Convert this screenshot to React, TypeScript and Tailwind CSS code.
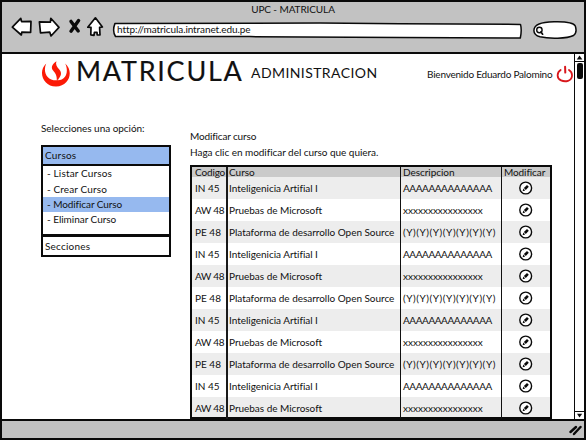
import React from "react";

const courses = [
  { code: "IN 45", name: "Inteligenicia Artifial I", text: "AAAAAAAAAAAAAA", codeTrack: "tracking-[0px]", track: "tracking-[-0.42px]" },
  { code: "AW 48", name: "Pruebas de Microsoft", text: "xxxxxxxxxxxxxxxx", codeTrack: "tracking-[-0.3px]", track: "tracking-[0px]" },
  { code: "PE 48", name: "Plataforma de desarrollo Open Source", text: "(Y)(Y)(Y)(Y)(Y)(Y)(Y)", codeTrack: "tracking-[0px]", track: "tracking-[0.52px]" },
];
const rows = Array.from({ length: 11 }, (_, i) => courses[i % 3]);

function NavIcons() {
  return (
    <svg className="block h-6 w-[94px] shrink-0" viewBox="11 15 94 24" fill="#fff" stroke="#0a0a0a" strokeWidth="1.7" strokeLinejoin="round" strokeLinecap="round">
      <path d="M12.3 27.2 L20.8 18.4 L21.6 21.6 L31 21.4 L30.6 32.4 L21.8 32.2 L21.3 35 Z" />
      <path d="M59 27.4 L50.8 18.3 L50.4 22.2 L39.4 21.8 L40.5 32.8 L49.8 32.2 L51 36 Z" />
      <path d="M71 21.4 L78.2 31 M78.6 20.6 L71 31.2" strokeWidth="3.4" fill="none" />
      <path d="M95.4 17.8 L102.4 27 L99.6 27.4 L100 34.8 L97.2 35 L97 32.4 L94.4 32.4 L94 35.4 L90.8 34.8 L91 27.4 L87.8 27.2 Z" />
    </svg>
  );
}

function SearchBox() {
  return (
    <svg className="block h-5 w-[44px] shrink-0" viewBox="533 20 44 20" fill="#fff" stroke="#0a0a0a" strokeWidth="1.5" strokeLinecap="round">
      <path d="M533.9 30.5 C534 24 541 22.4 554 21.8 C565 21.5 573.5 22.5 575.3 26 C576.4 29.5 576.5 33.5 573.5 35.5 C567 38.8 549 39 540 36.8 C536 35.7 533.9 33.5 533.9 30.5 Z" />
      <circle cx="539.4" cy="30" r="2.7" strokeWidth="1.4" />
      <path d="M541 32 L542.6 34.2" strokeWidth="1.7" />
    </svg>
  );
}

function Logo() {
  return (
    <svg className="block h-[28px] w-[30px] shrink-0" viewBox="41 60 30 28" fill="#fb1a06">
      <path d="M46.2 63.5 C37.5 71.5 43 86.6 56 86.6 C69.5 86.6 74 71 65.2 63.5 C69 71.5 66 80 58 80.2 C58.9 78.5 58 76 57.6 80.2 L56.6 80.3 C46 80.5 42.8 71 46.2 63.5 Z" />
      <path d="M56.4 61.2 C51.5 64.5 50.8 67.8 53.3 70.8 C55.2 73.2 57 75.5 56.8 80.4 C61.5 76.5 62.2 72.8 59.3 69.5 C56.7 66.6 55.4 64.6 56.4 61.2 Z" />
    </svg>
  );
}

function PowerIcon() {
  return (
    <svg className="block h-[18px] w-[17px] shrink-0" viewBox="557 65 17 18" fill="none" stroke="#d8171c" strokeWidth="1.8" strokeLinecap="round">
      <path d="M566.1 66.8 L566.3 72.6" strokeWidth="2" />
      <path d="M561.6 70 C557.6 72.5 557.6 78.5 562 80.4 C566.5 82.3 572.5 81 573 76 C573.2 73.5 572.2 71.3 570 70" />
    </svg>
  );
}

function EditIcon() {
  return (
    <svg className="block size-[14px]" viewBox="0 0 14 14">
      <circle cx="6.7" cy="7" r="5.9" fill="#fff" stroke="#0a0a0a" strokeWidth="1.4" />
      <path d="M3.6 10.3 L4.4 7.6 L6.2 9.4 Z M4.9 7 L8 4 L9.8 5.7 L6.8 8.9 Z" fill="#0a0a0a" />
    </svg>
  );
}

function MenuItem({ children, track, active }: { children: React.ReactNode; track: string; active?: boolean }) {
  return (
    <li className={`flex h-[15.4px] items-center pl-1 ${track} ${active ? "bg-[#96b9ef]" : ""}`}>
      - {children}
    </li>
  );
}

function Sidebar() {
  return (
    <aside className="w-[130px] shrink-0 pt-[22px]">
      <p className="h-[23px] leading-3 tracking-[-0.04px]">Selecciones una opción:</p>
      <div className="border-2 border-[#0a0a0a]">
        <div className="flex h-[17px] items-center bg-[#96b9ef] pl-[2px] tracking-[0.2px]">Cursos</div>
        <ul className="h-[70px] border-t-2 border-[#0a0a0a]">
          <MenuItem track="tracking-[0.15px]">Listar Cursos</MenuItem>
          <MenuItem track="tracking-[0.12px]">Crear Curso</MenuItem>
          <MenuItem track="tracking-[-0.08px]" active>Modificar Curso</MenuItem>
          <MenuItem track="tracking-[-0.03px]">Eliminar Curso</MenuItem>
        </ul>
        <div className="flex h-[21px] items-center border-t-[3px] border-[#0a0a0a] pl-[2px] tracking-[0.2px]">Secciones</div>
      </div>
    </aside>
  );
}

function CourseTable() {
  const grid = "grid grid-cols-[34px_174px_101px_49px]";
  const line = "border-l-2 border-[#1a1a1a]";
  const thinLine = "border-l border-[#111]";
  return (
    <div className="w-[362px] border-2 border-[#0a0a0a]">
      <div className={`${grid} h-[10px] bg-[#cacaca] leading-[10px] whitespace-nowrap`}>
        <div className="pl-[3px] tracking-[-0.15px]">Codigo</div>
        <div className={`${line} pl-px`}>Curso</div>
        <div className={`${thinLine} pl-[2px] tracking-[-0.05px]`}>Descripcion</div>
        <div className={`${thinLine} pl-[2px] tracking-[-0.1px]`}>Modificar</div>
      </div>
      {rows.map((r, i) => (
        <div key={i} className={`${grid} h-[22px] leading-[23px] whitespace-nowrap last:h-[20px] ${i % 2 ? "bg-white" : "bg-[#ededed]"}`}>
          <div className={`pl-[3px] ${r.codeTrack}`}>{r.code}</div>
          <div className={`${line} pl-px tracking-[-0.03px]`}>{r.name}</div>
          <div className={`${thinLine} pl-[2px] ${r.track}`}>{r.text}</div>
          <div className={`${thinLine} flex justify-center pt-[4px]`}><EditIcon /></div>
        </div>
      ))}
    </div>
  );
}

function Scrollbar() {
  return (
    <div className="flex w-[10px] shrink-0 flex-col items-center border-l-[1.5px] border-[#0a0a0a] bg-white">
      <svg className="block h-[8px] w-full border-b border-[#0a0a0a]" viewBox="0 0 9 7"><path d="M1.8 5.4 L4.5 1.6 L7.4 5.4 Z" fill="#0a0a0a" /></svg>
      <div className="mt-px h-[16px] w-[6px] rounded-[2px] bg-[#0a0a0a]" />
      <svg className="mt-auto block h-[8px] w-full border-t border-[#0a0a0a]" viewBox="0 0 9 7"><path d="M2 1.8 L7.2 1.8 L4.5 5.4 Z" fill="#0a0a0a" /></svg>
    </div>
  );
}

export default function App() {
  return (
    <div className="flex h-[440px] w-[586px] flex-col overflow-hidden border-2 border-[#0a0a0a] bg-white font-['Lato','Noto_Sans',sans-serif] text-[10px] text-[#111]">
      <header className="h-[52px] shrink-0 border-b-2 border-[#0a0a0a] bg-[#c2c2c2]">
        <h1 className="h-[13px] text-center leading-[15px] tracking-[-0.1px]">UPC - MATRICULA</h1>
        <div className="flex h-6 items-start pl-[9px]">
          <NavIcons />
          <div className="relative mt-[7px] ml-[7px] h-[17px] w-[410px] shrink-0">
            <svg className="absolute inset-0 size-full" viewBox="112 22 410 17" fill="#fff" stroke="#0a0a0a" strokeWidth="1.5" strokeLinejoin="round">
              <path d="M115 23.4 L320 23.1 L400 23.7 L520.5 24.4 Q522 30 520.3 38 L400 37.6 L250 36.6 L115.5 36.5 Q112 31 115 23.4 Z" />
            </svg>
            <span className="relative block pl-[5px] leading-[15px] tracking-[-0.1px]">http://matricula.intranet.edu.pe</span>
          </div>
          <div className="mt-[5px] ml-[11px]"><SearchBox /></div>
        </div>
      </header>
      <main className="flex min-h-0 flex-1">
        <div className="flex min-w-0 flex-1 flex-col pl-[39px]">
          <div className="flex h-[46px] shrink-0 pt-[6px] whitespace-nowrap">
            <Logo />
            <div className="ml-[5px] w-[175px] text-[27px] leading-[22px] tracking-[1.75px] [-webkit-text-stroke:0.15px_#111]">MATRICULA</div>
            <div className="w-[176px] pt-[4px] text-[14px] leading-[18px] tracking-[0.42px]">ADMINISTRACION</div>
            <div className="w-[129px] pt-[7px] leading-[14px] tracking-[-0.22px]">Bienvenido Eduardo Palomino</div>
            <div className="pt-[5px]"><PowerIcon /></div>
          </div>
          <div className="flex min-h-0 flex-1">
            <Sidebar />
            <section className="ml-[19px] pt-[28px]">
              <p className="h-4 leading-4 tracking-[-0.15px]">Modificar curso</p>
              <p className="h-[21px] leading-4 tracking-[-0.04px]">Haga clic en modificar del curso que quiera.</p>
              <CourseTable />
            </section>
          </div>
        </div>
        <Scrollbar />
      </main>
      <footer className="flex h-[19px] shrink-0 items-center justify-end border-t-2 border-[#0a0a0a] bg-[#c2c2c2] pr-[2px]">
        <svg className="block h-[12px] w-[13px]" viewBox="0 0 13 12" stroke="#0a0a0a" strokeWidth="2.4" strokeLinecap="round"><path d="M1.5 8 L7 3 M5 10 L11.5 3" /></svg>
      </footer>
    </div>
  );
}
